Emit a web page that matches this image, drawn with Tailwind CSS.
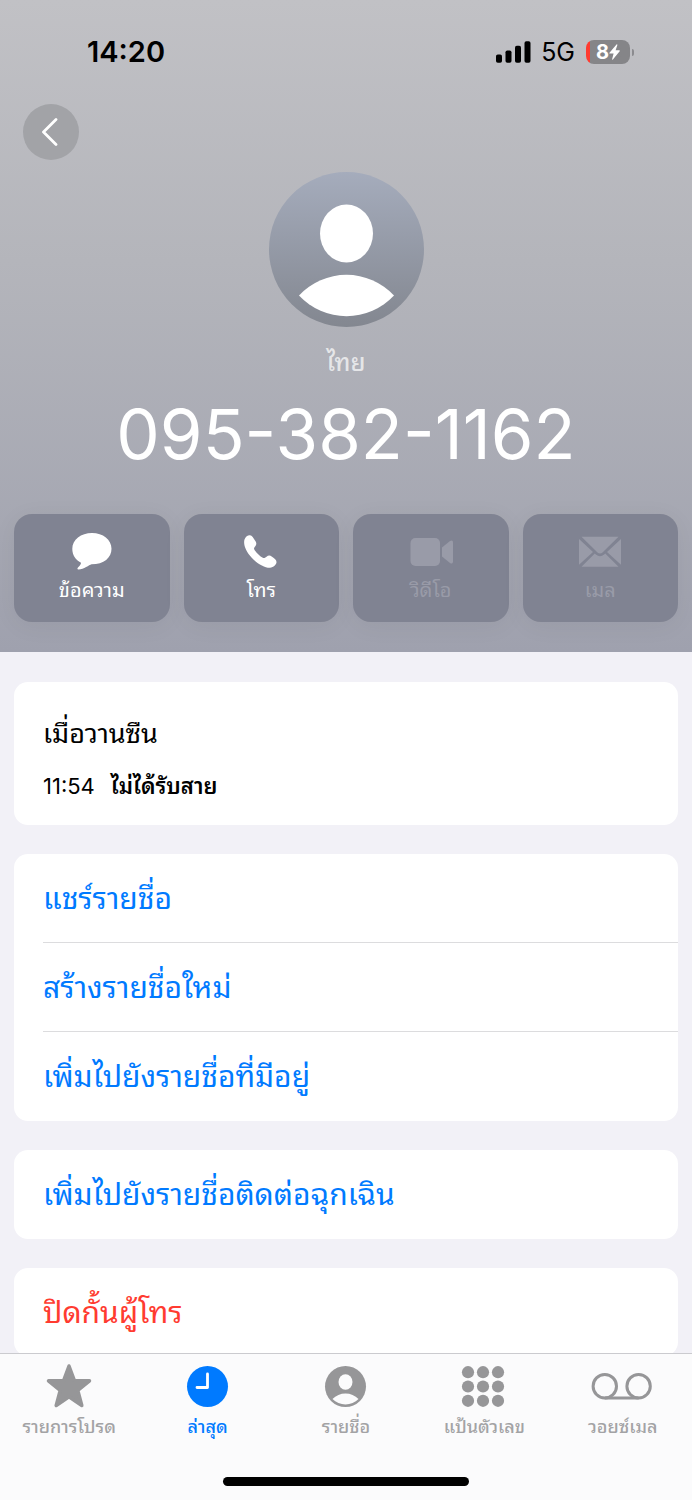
<!DOCTYPE html>
<html lang="th">

<head>
  <title>095-382-1162</title>
  <meta charset="UTF-8" />
  <meta name="viewport" content="width=device-width, initial-scale=1" />
  <script src="https://cdn.jsdelivr.net/npm/@tailwindcss/browser@4"></script>
</head>

<body class="min-h-screen bg-[#f2f1f7] text-black font-[Inter,'Noto_Sans_Thai_Looped','Noto_Sans_Thai','Noto_Sans',sans-serif]">
  <header class="bg-linear-to-b from-[#c1c1c5] from-0% via-[#b4b5bb] via-40% to-[#9fa1ae] to-100% pb-[30px]">
    <!-- status bar -->
    <div class="flex h-[104px] items-center justify-between pl-[87px] pr-[58px]">
      <time class="text-[29px] leading-8 font-semibold">14:20</time>
      <div class="flex items-center">
        <svg class="h-[22px] w-[35px]" viewBox="0 0 35 22" role="img" aria-label="Signal">
          <rect x="0" y="13.5" width="6" height="8.3" rx="1.8" />
          <rect x="9.5" y="9.5" width="6" height="12.3" rx="1.8" />
          <rect x="19" y="4.8" width="6" height="17" rx="1.8" />
          <rect x="28.500" y="0.300" width="6" height="21.500" rx="1.8" />
        </svg>
        <span class="ml-[10px] text-[25px] leading-8">5G</span>
        <div class="ml-[11px] flex items-center">
          <div class="flex h-6 w-[44px] items-center justify-center overflow-hidden rounded-[8px] bg-linear-to-r from-[#ff3b30] from-[4px] to-[#858588] to-[4px] text-white">
            <span class="text-[20px] leading-6 font-bold">8</span>
            <svg class="h-4 w-[11px] fill-current" viewBox="0 0 11 16">
              <path d="M7.500 0.500L0.500 8.700Q0 9.500 0.900 9.500H4.600L3.100 15.300Q3.200 16 3.900 15.400L10.700 7.200Q11.200 6.300 10.300 6.300H6.600L8.400 1Q8.300 0 7.500 0.500Z" />
            </svg>
          </div>
          <div class="ml-[2px] h-[7px] w-[2px] rounded-r-full bg-[#8b8b8f]"></div>
        </div>
      </div>
    </div>

    <button type="button" aria-label="Back" class="ml-[23px] grid size-14 place-items-center rounded-full bg-[#a2a3a7] text-white">
      <svg class="h-7 w-[18px]" viewBox="0 0 18 28" fill="none" stroke="currentColor" stroke-width="2.800" stroke-linecap="round" stroke-linejoin="round">
        <path d="M14 1.500L1.500 14L14 26.500" />
      </svg>
    </button>

    <!-- contact -->
    <div class="mt-3 flex flex-col items-center text-white">
      <svg class="size-[155px]" viewBox="0 0 155 155" role="img" aria-label="Contact photo">
        <defs>
          <linearGradient id="avatar" x1="0" y1="0" x2="0" y2="1">
            <stop offset="0" stop-color="#a5acbc" />
            <stop offset="1" stop-color="#838790" />
          </linearGradient>
        </defs>
        <circle cx="77.500" cy="77.500" r="77.500" fill="url(#avatar)" />
        <ellipse cx="77.500" cy="61.500" rx="26.500" ry="29" fill="#fff" />
        <path d="M30 123.500A65 65 0 0 1 125 123.500A65 65 0 0 1 30 123.500Z" fill="#fff" />
      </svg>
      <p class="mt-5 text-[24px] leading-8 font-medium text-white/70">ไทย</p>
      <h1 class="mt-[19px] text-[69px] leading-[72px] font-normal">095-382-1162</h1>
    </div>

    <div class="mt-11 grid grid-cols-4 gap-[14px] px-[14px] text-[20px] leading-7 text-white">
      <button type="button" class="flex h-[108px] flex-col items-center gap-1 rounded-[18px] bg-[#808392] pt-[18px] shadow-[0_4px_24px] shadow-black/5">
        <svg class="h-10 w-11 fill-current" viewBox="0 0 44 40">
          <path d="M22 1C33 1 41.500 7.800 41.500 16.700S34 32.300 21.500 32.300C19 33 14 37.500 8.500 37.500C7 37.500 7.200 36 8.200 35.200C10.200 33.500 11 32 11 30.700C5.500 28 2.300 22.800 2.300 16.700C2.300 7.800 11 1 22 1Z" />
        </svg>
        ข้อความ
      </button>
      <button type="button" class="flex h-[108px] flex-col items-center gap-1 rounded-[18px] bg-[#808392] pt-[18px] shadow-[0_4px_24px] shadow-black/5">
        <svg class="h-10 w-11 fill-current" viewBox="0 0 44 40">
          <path d="M5.500 7.500C6.500 4.500 9 3 11 3.200C13 3.500 14.500 6 16 8.500C17.500 10.500 17.800 12 16.500 14C15 16 14.500 16.500 15.700 18.200C17.800 21 21 24.300 23.800 25.700C25 26.400 25.800 26 27.500 24.700C29.500 23.200 31 23.300 33 24.700C35.500 26.400 37.500 28 37.500 30C37.500 32.500 34.500 35.500 31 35.800C25.500 36 18 31.500 12.500 25.500C7 19.500 4 12.500 5.500 7.500Z" />
        </svg>
        โทร
      </button>
      <button type="button" disabled class="flex h-[108px] flex-col items-center gap-1 rounded-[18px] bg-[#808392] pt-[18px] text-[#999ba8] shadow-[0_4px_24px] shadow-black/5">
        <svg class="h-10 w-11 fill-current" viewBox="0 0 44 40">
          <rect x="1.500" y="6" width="29.500" height="28" rx="5" />
          <path d="M33 15.500L41 9Q44 7.500 44 10.500V29.500Q44 32.500 41 31L33 24.500Z" />
        </svg>
        วิดีโอ
      </button>
      <button type="button" disabled class="flex h-[108px] flex-col items-center gap-1 rounded-[18px] bg-[#808392] pt-[18px] text-[#999ba8] shadow-[0_4px_24px] shadow-black/5">
        <svg class="h-10 w-11 fill-current" viewBox="0 0 44 40">
          <path d="M3.500 4.800H40.500L24.500 20.500Q22 22.500 19.500 20.500Z" />
          <path d="M1 7L15 20L1 32.800ZM43 7L29 20L43 32.800ZM16.800 21.500L17.800 22.500Q22 26 26.200 22.500L27.200 21.500L40.500 34.800H3.500Z" />
        </svg>
        เมล
      </button>
    </div>
  </header>

  <main class="flex flex-col gap-[29px] px-[14px] pt-[30px] pb-[150px]">
    <section class="rounded-[14px] bg-white px-[29px] pt-8 pb-[19px]">
      <h2 class="text-[27px] leading-10">เมื่อวานซืน</h2>
      <p class="mt-3 flex gap-4 text-[22px] leading-10">
        <time>11:54</time>
        <span class="font-semibold">ไม่ได้รับสาย</span>
      </p>
    </section>

    <section class="rounded-[14px] bg-white pl-[29px] text-[30px] leading-[88px] text-[#007aff]">
      <a href="#" class="block h-[89px] border-b border-[#dcdcde]">แชร์รายชื่อ</a>
      <a href="#" class="block h-[89px] border-b border-[#dcdcde]">สร้างรายชื่อใหม่</a>
      <a href="#" class="block h-[89px]">เพิ่มไปยังรายชื่อที่มีอยู่</a>
    </section>

    <section class="rounded-[14px] bg-white pl-[29px] text-[30px] leading-[88px] text-[#007aff]">
      <a href="#" class="block h-[89px]">เพิ่มไปยังรายชื่อติดต่อฉุกเฉิน</a>
    </section>

    <section class="rounded-[14px] bg-white pl-[29px] text-[30px] leading-[88px] text-[#ff3b30]">
      <button type="button" class="block w-full text-left">ปิดกั้นผู้โทร</button>
    </section>
  </main>

  <!-- tab bar -->
  <nav class="fixed inset-x-0 bottom-0 border-t border-[#cbcbcf] bg-[#fbfbfc] pb-[14px]">
    <div class="grid grid-cols-5 text-center text-[18px] leading-7 font-medium text-[#a3a3a5]">
      <a href="#" class="flex flex-col items-center gap-[2px] pt-[9px]">
        <svg class="h-12 w-16 fill-[#969698]" viewBox="0 0 64 48">
          <path d="M32 3L37.500 17.800H52.500L40.800 27.500L44.800 42.500L32 33.800L19.200 42.500L23.200 27.500L11.500 17.800H26.500Z" stroke="#969698" stroke-width="3.500" stroke-linejoin="round" />
        </svg>
        รายการโปรด
      </a>
      <a href="#" aria-current="page" class="flex flex-col items-center gap-[2px] pt-[9px] text-[#007aff]">
        <svg class="h-12 w-16 fill-current" viewBox="0 0 64 48">
          <circle cx="31.500" cy="23.500" r="20.500" />
          <path d="M31.500 11V24.500H21" fill="none" stroke="#fff" stroke-width="2.800" stroke-linecap="round" stroke-linejoin="round" />
        </svg>
        ล่าสุด
      </a>
      <a href="#" class="flex flex-col items-center gap-[2px] pt-[9px]">
        <svg class="h-12 w-16 fill-[#969698]" viewBox="0 0 64 48">
          <circle cx="31.500" cy="23.500" r="20.500" />
          <ellipse cx="31.500" cy="19" rx="7" ry="7.800" fill="#fbfbfc" />
          <path d="M18.500 36A18 18 0 0 1 44.500 36A18 18 0 0 1 18.500 36Z" fill="#fbfbfc" />
        </svg>
        รายชื่อ
      </a>
      <a href="#" class="flex flex-col items-center gap-[2px] pt-[9px]">
        <svg class="h-12 w-16 fill-[#969698]" viewBox="0 0 64 48">
          <circle cx="16" cy="9.200" r="6.100" />
          <circle cx="31" cy="9.200" r="6.100" />
          <circle cx="46" cy="9.200" r="6.100" />
          <circle cx="16" cy="23.500" r="6.100" />
          <circle cx="31" cy="23.500" r="6.100" />
          <circle cx="46" cy="23.500" r="6.100" />
          <circle cx="16" cy="37.800" r="6.100" />
          <circle cx="31" cy="37.800" r="6.100" />
          <circle cx="46" cy="37.800" r="6.100" />
        </svg>
        แป้นตัวเลข
      </a>
      <a href="#" class="flex flex-col items-center gap-[2px] pt-[9px]">
        <svg class="h-12 w-16" viewBox="0 0 64 48" fill="none" stroke="#969698" stroke-width="3">
          <circle cx="13.800" cy="23.200" r="11.700" />
          <circle cx="47.600" cy="23.200" r="11.700" />
          <path d="M13.800 34.900H47.600" />
        </svg>
        วอยซ์เมล
      </a>
    </div>
    <div class="mx-auto mt-9 h-[9px] w-[246px] rounded-full bg-black"></div>
  </nav>
</body>

</html>
